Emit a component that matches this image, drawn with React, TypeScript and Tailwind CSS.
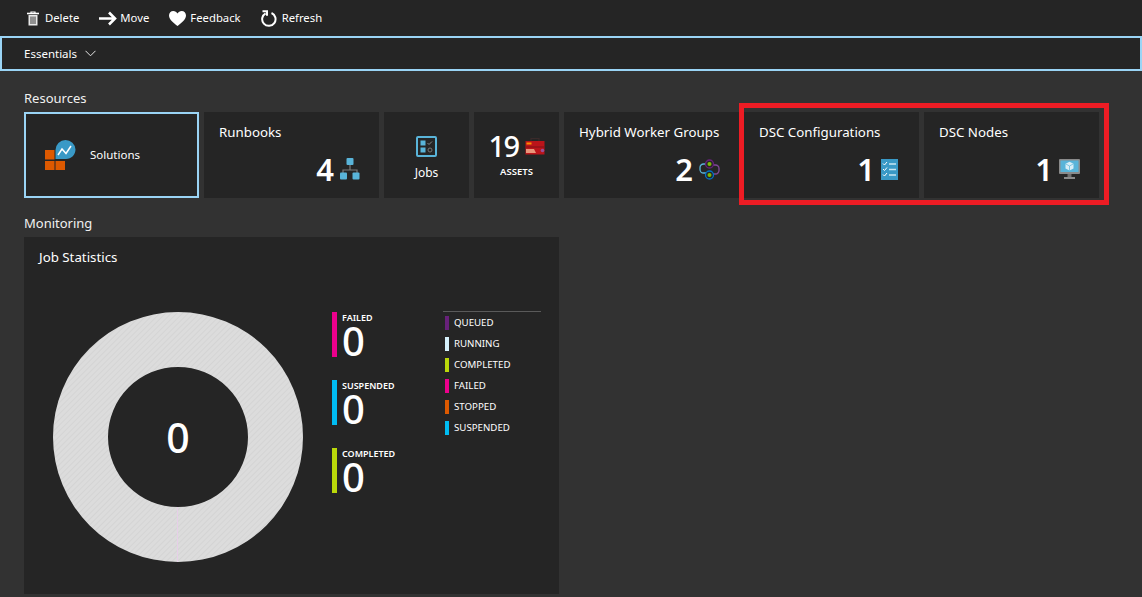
import { ReactNode } from "react";

const FONT = "font-['Noto_Sans','Open_Sans',sans-serif]";

const stats = [
  { label: "FAILED", color: "bg-[#ec008c]" },
  { label: "SUSPENDED", color: "bg-[#00bcf2]" },
  { label: "COMPLETED", color: "bg-[#bad80a]" },
];

const legend = [
  { label: "QUEUED", color: "bg-[#68217a]" },
  { label: "RUNNING", color: "bg-[#d5f1fb]" },
  { label: "COMPLETED", color: "bg-[#bad80a]" },
  { label: "FAILED", color: "bg-[#ec008c]" },
  { label: "STOPPED", color: "bg-[#dd5900]" },
  { label: "SUSPENDED", color: "bg-[#00bcf2]" },
];

function TrashIcon() {
  return (
    <svg width="14" height="15" viewBox="0 0 14 15" fill="none">
      <path d="M1 2.500h12" stroke="#fff" strokeWidth="1.600" />
      <path d="M5 2.500V1h4v1.500" stroke="#fff" strokeWidth="1.200" />
      <path d="M2.500 4h9v10.500h-9z" fill="#e8e8e8" />
      <path d="M5 5.500v7.500M7 5.500v7.500M9 5.500v7.500" stroke="#252525" strokeWidth="0.900" />
    </svg>
  );
}

function ArrowIcon() {
  return (
    <svg width="18" height="15" viewBox="0 0 18 15" fill="none">
      <path d="M0 7.500h16M10 1.500l6 6-6 6" stroke="#fff" strokeWidth="2.600" />
    </svg>
  );
}

function HeartIcon() {
  return (
    <svg width="17" height="15" viewBox="0 0 17 15">
      <path
        d="M8.500 15C5 12 0 8.700 0 4.400 0 1.900 1.900 0 4.300 0c1.800 0 3.300.9 4.200 2.400C9.400.9 10.900 0 12.700 0 15.100 0 17 1.900 17 4.400c0 4.300-5 7.600-8.500 10.600z"
        fill="#fff"
      />
    </svg>
  );
}

function RefreshIcon() {
  return (
    <svg width="16" height="17" viewBox="0 0 16 17" fill="none">
      <path d="M4.600 3.300A6.700 6.700 0 1 0 10.500 3" stroke="#fff" strokeWidth="2" />
      <path d="M1.500 1.200h4.500v4.500" stroke="#fff" strokeWidth="2" />
    </svg>
  );
}

function SolutionsIcon() {
  return (
    <svg width="31" height="31" viewBox="0 0 31 31">
      <rect x="0" y="10" width="9.500" height="9.500" fill="#dd5900" />
      <rect x="0" y="21" width="9.500" height="9" fill="#dd5900" />
      <rect x="10.500" y="21" width="9.500" height="9" fill="#dd5900" />
      <path d="M20.500 0a10 10 0 0 1 10 9.500c0 5-4 9.500-9.500 9.500H10.500V10a10 10 0 0 1 10-10z" fill="#3999c6" />
      <path d="M13 15l4-6 4 4.500L26 6" fill="none" stroke="#fff" strokeWidth="1.500" />
    </svg>
  );
}

function RunbookIcon() {
  return (
    <svg width="20" height="22" viewBox="0 0 20 22">
      <path d="M10 7v5M3 15v-3h14v3" fill="none" stroke="#7a7a7a" strokeWidth="1.200" />
      <rect x="6.500" y="0" width="7" height="7" rx="1" fill="#59b4d9" />
      <rect x="0" y="14.500" width="7" height="7" rx="1" fill="#59b4d9" />
      <rect x="12.500" y="14.500" width="7" height="7" rx="1" fill="#59b4d9" />
    </svg>
  );
}

function JobsIcon() {
  return (
    <svg width="21" height="21" viewBox="0 0 21 21">
      <rect x="1" y="1" width="19" height="19" rx="1" fill="#252525" stroke="#59b4d9" strokeWidth="2" />
      <rect x="4.500" y="4.500" width="5" height="5" fill="#59b4d9" />
      <rect x="4.500" y="11.500" width="5" height="5" fill="#59b4d9" />
      <path d="M11.500 7l1.500 1.500 3-3" fill="none" stroke="#8a8a8a" strokeWidth="1" />
      <circle cx="14" cy="14" r="2" fill="none" stroke="#777" strokeWidth="1" />
    </svg>
  );
}

function AssetsIcon() {
  return (
    <svg width="20" height="18" viewBox="0 0 20 18">
      <path d="M6 4V1.500h8V4" fill="none" stroke="#3a2a2a" strokeWidth="1.200" />
      <rect x="0.500" y="4" width="19" height="13.500" fill="#ba141a" />
      <rect x="0.500" y="9.500" width="19" height="1" fill="#7f1015" />
      <rect x="1.500" y="5.500" width="5" height="2" fill="#ff8c00" />
      <path d="M1 12h8l2 4H1z" fill="#e9967a" />
      <circle cx="17.500" cy="13.500" r="1.800" fill="#9b4f96" />
    </svg>
  );
}

function HybridIcon() {
  return (
    <svg width="21" height="21" viewBox="0 0 21 21" fill="none">
      <path d="M7 5H4.500a3.500 3.500 0 0 0-3.500 3.500v2A3.500 3.500 0 0 0 4.500 14H7" stroke="#59b4d9" strokeWidth="1.300" />
      <path d="M14 6h2.500A3.500 3.500 0 0 1 20 9.500v2a3.500 3.500 0 0 1-3.500 3.500H14" stroke="#804998" strokeWidth="1.300" />
      <circle cx="10.500" cy="5" r="4" stroke="#68217a" strokeWidth="1.300" />
      <circle cx="10.500" cy="5" r="2" fill="#7fba00" />
      <circle cx="10.500" cy="16" r="4" stroke="#0072c6" strokeWidth="1.300" />
      <circle cx="10.500" cy="16" r="2" fill="#7fba00" />
    </svg>
  );
}

function ChecklistIcon() {
  return (
    <svg className="mr-[2px]" width="17" height="21" viewBox="0 0 17 21" fill="none">
      <rect width="17" height="21" fill="#3999c6" />
      <path d="M2 4.500l1.500 1.500L6 3M2 10l1.500 1.500L6 8.500M2 15.500L3.500 17 6 14" stroke="#fff" strokeWidth="1" />
      <path d="M8 5h7M8 10.500h7M8 16h7" stroke="#c8e6f2" strokeWidth="1.300" />
    </svg>
  );
}

function NodeIcon() {
  return (
    <svg width="21" height="20" viewBox="0 0 21 20">
      <rect x="0" y="0" width="21" height="15" rx="1" fill="#8a8a8a" />
      <rect x="1.500" y="1.500" width="18" height="11.500" fill="#59b4d9" />
      <path d="M10.500 2.800l4 2v4.600l-4 2.200-4-2.200V4.800z" fill="#d8eef7" />
      <path d="M6.500 4.800l4 2.200 4-2.200M10.500 7v4.600" fill="none" stroke="#59b4d9" strokeWidth="0.700" />
      <rect x="8.500" y="15" width="4" height="3" fill="#6f6f6f" />
      <rect x="5" y="18" width="11" height="2" fill="#8a8a8a" />
    </svg>
  );
}

function CountTile({ title, count, icon }: { title: string; count: number; icon: ReactNode }) {
  return (
    <div className="w-[175px] h-[86px] shrink-0 bg-[#252525] pl-[15px] pr-[19px] pt-[10px] flex flex-col">
      <div className="text-[13.300px] leading-[20px] text-white whitespace-nowrap">{title}</div>
      <div className="mt-[9px] h-[36px] flex items-center justify-end gap-[6px]">
        <span className="text-[31px] leading-[36px] font-semibold text-white">{count}</span>
        {icon}
      </div>
    </div>
  );
}

export default function App() {
  return (
    <div className={`${FONT} w-[1142px] h-[597px] overflow-hidden bg-[#323232] text-white`}>
      {/* Command bar */}
      <div className="h-[36px] bg-[#252525] flex items-center pl-[26px] text-[11.300px]">
        <div className="flex items-center gap-[5px] mr-[20px]"><TrashIcon /><span>Delete</span></div>
        <div className="flex items-center gap-[3px] mr-[20px]"><ArrowIcon /><span>Move</span></div>
        <div className="flex items-center gap-[4px] mr-[20px]"><HeartIcon /><span>Feedback</span></div>
        <div className="flex items-center gap-[5px]"><RefreshIcon /><span>Refresh</span></div>
      </div>

      {/* Essentials */}
      <div className="h-[35px] bg-[#252525] border-2 border-[#9ad4f5] flex items-center pl-[22px] text-[11.500px]">
        <span>Essentials</span>
        <svg className="ml-[8px]" width="11" height="7" viewBox="0 0 11 7" fill="none">
          <path d="M.5.800l5 5 5-5" stroke="#e6e6e6" strokeWidth="1" />
        </svg>
      </div>

      <div className="pl-[24px]">
        <div className="mt-[17px] h-[20px] text-[13px] leading-[20px] text-[#f0f0f0]">Resources</div>

        {/* Resource tiles */}
        <div className="relative mt-[4px] flex gap-[5px]">
          <div className="w-[175px] h-[86px] shrink-0 bg-[#252525] border-2 border-[#9ad4f5] flex items-center pl-[19px]">
            <SolutionsIcon />
            <span className="ml-[14px] text-[11.500px]">Solutions</span>
          </div>
          <CountTile title="Runbooks" count={4} icon={<RunbookIcon />} />
          <div className="w-[85px] h-[86px] shrink-0 bg-[#252525] flex flex-col items-center pt-[24px]">
            <JobsIcon />
            <span className="mt-[8px] text-[12px] leading-[16px]">Jobs</span>
          </div>
          <div className="w-[85px] h-[86px] shrink-0 bg-[#252525] flex flex-col items-center pt-[16px]">
            <div className="flex items-center gap-[6px]">
              <span className="text-[29px] leading-[36px] font-medium tracking-[-1.500px]">19</span>
              <AssetsIcon />
            </div>
            <span className="mt-[1px] text-[9.500px] leading-[14px] font-semibold">ASSETS</span>
          </div>
          <CountTile title="Hybrid Worker Groups" count={2} icon={<HybridIcon />} />
          <CountTile title="DSC Configurations" count={1} icon={<ChecklistIcon />} />
          <CountTile title="DSC Nodes" count={1} icon={<NodeIcon />} />
          {/* Annotation box drawn over the tiles */}
          <div className="absolute left-[715px] top-[-9px] w-[370px] h-[102px] border-[5px] border-[#ed1c24]" />
        </div>

        <div className="mt-[15px] h-[20px] text-[13px] leading-[20px] text-[#f0f0f0]">Monitoring</div>

        {/* Job statistics */}
        <div className="mt-[4px] w-[535px] h-[357px] bg-[#252525] relative">
          <div className="pl-[15px] pt-[10px] text-[13.300px] leading-[20px]">Job Statistics</div>
          <div className="flex mt-[45px] pl-[29px]">
            <div className="relative w-[250px] h-[250px] shrink-0">
              <svg width="250" height="250" viewBox="0 0 250 250">
                <defs>
                  <pattern id="stripes" width="4" height="4" patternUnits="userSpaceOnUse" patternTransform="rotate(-45)">
                    <rect width="4" height="4" fill="#dcdcdc" />
                    <rect width="4" height="1" fill="#d4d4d4" />
                  </pattern>
                </defs>
                <path
                  fillRule="evenodd"
                  d="M125 0a125 125 0 1 0 0 250a125 125 0 1 0 0-250zM125 55a70 70 0 1 1 0 140a70 70 0 1 1 0-140z"
                  fill="url(#stripes)"
                />
                <path d="M124.500 195v55" stroke="#e6cfe8" strokeWidth="1" />
              </svg>
              <div className="absolute inset-0 pt-[2px] flex items-center justify-center text-[41px] font-medium">0</div>
            </div>

            <div className="ml-[29px] flex flex-col gap-[23px] w-[111px]">
              {stats.map((s) => (
                <div key={s.label} className="flex h-[45px]">
                  <div className={`w-[5px] h-[45px] ${s.color}`} />
                  <div className="ml-[5px]">
                    <div className="text-[9px] leading-[11px] font-semibold">{s.label}</div>
                    <div className="text-[40px] leading-[36px] font-medium">0</div>
                  </div>
                </div>
              ))}
            </div>

            <div className="w-[98px] -mt-[1px] border-t border-[#5a5a5a] pl-[2px] pt-[4px] flex flex-col gap-[7px]">
              {legend.map((l) => (
                <div key={l.label} className="flex items-center h-[14px]">
                  <div className={`w-[4px] h-[14px] ${l.color}`} />
                  <span className="ml-[5px] text-[9.700px] leading-[14px]">{l.label}</span>
                </div>
              ))}
            </div>
          </div>
        </div>
      </div>
    </div>
  );
}
